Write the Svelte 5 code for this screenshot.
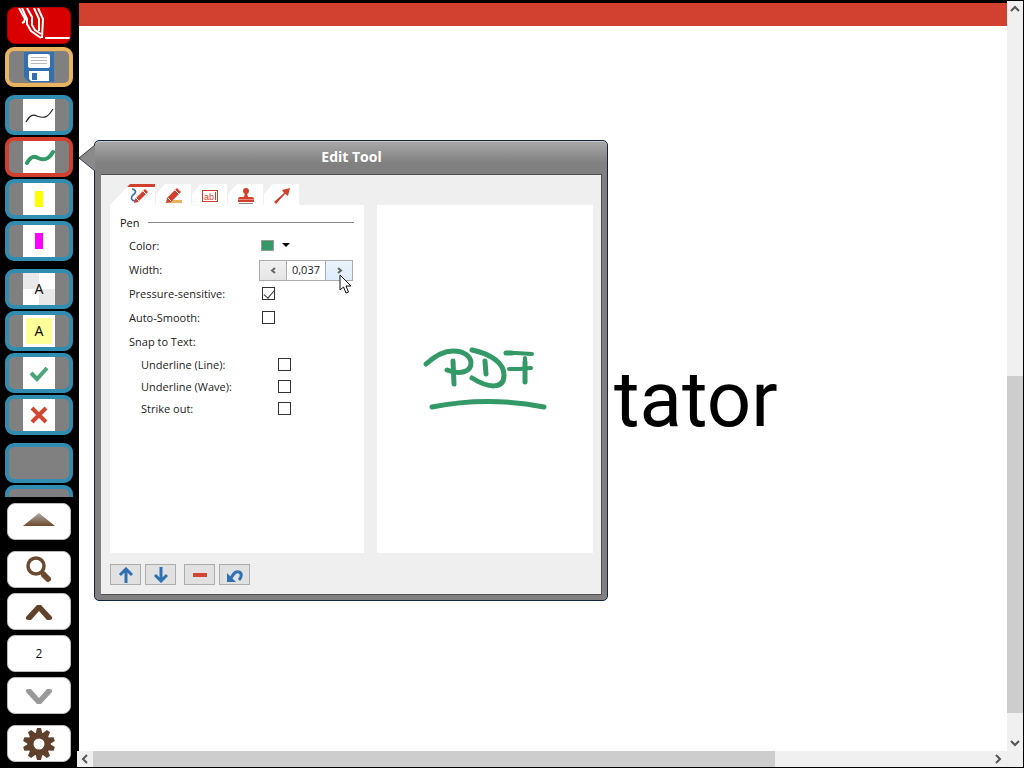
<script lang="ts">
  let active = $state('green-pen');
  let tab = $state('pen');
  let widthText = $state('0,037');
  let pressure = $state(true);
  let smooth = $state(false);
  let line = $state(false);
  let wave = $state(false);
  let strike = $state(false);

  const groups = [
    ['thin-pen', 'green-pen', 'yellow-marker', 'pink-marker'],
    ['text', 'note', 'check', 'cross'],
    ['empty', 'empty-2'],
  ];
  const tabs = ['pen', 'marker', 'text', 'stamp', 'arrow'];
</script>

<div class="app">
  <aside>
    <button class="key logo" aria-label="Application menu">
      <svg width="64" height="36" viewBox="0 0 64 36" fill="none" stroke="#fff" stroke-width="2">
        <path d="M12 0l6 11-1 3-2 1M15 0l5 11v5l4 7 10 7M20 0l5 9v8l3 5 6 4M27 0l5 11v12M31 0l5 11-1 19" />
        <path d="M38 30h25" />
      </svg>
    </button>
    <button class="tool save" aria-label="Save">
      <svg width="32" height="32" viewBox="0 0 32 32">
        <path d="M1 1h30v30H6l-5-5z" fill="#346fb0" />
        <rect x="5" y="3" width="22" height="14" rx="2" fill="#fff" />
        <path d="M8 6.500h16M8 9.500h16M8 12.500h16" stroke="#bbb" />
        <path d="M6 20h20v10H8l-2-2z" fill="#fff" /><rect x="9" y="22" width="5" height="7" fill="#346fb0" />
      </svg>
    </button>
    <div class="list">
      {#each groups as group}
        <div class="group">
          {#each group as name}
            <button class="tool" class:active={active === name} aria-label={name} onclick={() => (active = name)}>
              {#if !name.startsWith('empty')}
                <svg width="32" height="32" viewBox="0 0 32 32">
                  <rect width="32" height="32" fill="#fff" />
                  {#if name === 'thin-pen'}
                    <path d="M3 23C7 16 10 15 14 17c8 3 11 1 16-7" fill="none" stroke="#222" stroke-width="1.200" />
                  {:else if name === 'green-pen'}
                    <path d="M4 22C8 15 11 15 15 17c7 3 11 1 15-6" fill="none" stroke="#339966" stroke-width="4" stroke-linecap="round" />
                  {:else if name === 'yellow-marker'}
                    <rect x="12" y="8" width="8" height="16" fill="#ff0" />
                  {:else if name === 'pink-marker'}
                    <rect x="12" y="8" width="8" height="16" fill="#f0f" />
                  {:else if name === 'text'}
                    <path d="M0 0h16v32h16V16H0z" fill="#e9e9e9" />
                    <text x="16" y="21" text-anchor="middle">A</text>
                  {:else if name === 'note'}
                    <rect x="3" y="3" width="26" height="26" fill="#ff9" />
                    <text x="16" y="21" text-anchor="middle">A</text>
                  {:else if name === 'check'}
                    <path d="M8 16l6 6L24 11" fill="none" stroke="#4aa579" stroke-width="4" />
                  {:else if name === 'cross'}
                    <path d="M9 9l14 14M23 9L9 23" fill="none" stroke="#d04832" stroke-width="4" />
                  {/if}
                </svg>
              {/if}
            </button>
          {/each}
        </div>
      {/each}
    </div>
    <button class="key" aria-label="Scroll tools up">
      <svg width="32" height="32" viewBox="0 0 32 32">
        <defs><linearGradient id="up" x2="0" y2="1"><stop stop-color="#aaa" /><stop offset="1" stop-color="#70492c" /></linearGradient></defs>
        <path d="M16 7l16 13H0z" fill="url(#up)" />
      </svg>
    </button>
    <div class="nav">
      <button class="key" aria-label="Zoom">
        <svg width="32" height="32" viewBox="0 0 32 32" fill="none" stroke="#6b4a31">
          <circle cx="13" cy="12" r="8" stroke-width="3.500" /><path d="M19 18l3 3" stroke-width="4" /><path d="M21 21l4 4" stroke-width="6" stroke-linecap="round" />
        </svg>
      </button>
      <button class="key" aria-label="Previous page">
        <svg width="32" height="32" viewBox="0 0 32 32"><path d="M14 9h4l11 12q1 3-3 3h-2l-8-9-8 9H6q-4 0-3-3z" fill="#60412c" /></svg>
      </button>
      <button class="key number">2</button>
      <button class="key" aria-label="Next page">
        <svg width="32" height="32" viewBox="0 0 32 32"><path d="M14 24h4l11-12q1-3-3-3h-2l-8 9-8-9H6q-4 0-3 3z" fill="#999" /></svg>
      </button>
    </div>
    <button class="key" aria-label="Settings">
      <svg width="34" height="34" viewBox="-17 -17 34 34">
        <g fill="#60412c">
          {#each Array(10) as _, i}
            <path d="M-3.500-10L-2-16H2L3.500-10z" transform="rotate({i * 36})" />
          {/each}
        </g>
        <circle r="8.500" fill="none" stroke="#60412c" stroke-width="6" />
      </svg>
    </button>
  </aside>

  <main>
    <section class="page">
      <div class="band"></div>
      <h1>tator</h1>
    </section>
    <div class="bar vertical">
      <svg width="16" height="16" viewBox="0 0 16 16"><path d="M4 10l4-4 4 4" /></svg>
      <div class="track"><div class="thumb"></div></div>
      <svg width="16" height="16" viewBox="0 0 16 16"><path d="M4 6l4 4 4-4" /></svg>
    </div>
    <div class="bar horizontal">
      <svg width="16" height="16" viewBox="0 0 16 16"><path d="M10 4L6 8l4 4" /></svg>
      <div class="track"><div class="thumb"></div></div>
      <svg width="16" height="16" viewBox="0 0 16 16"><path d="M6 4l4 4-4 4" /></svg>
    </div>
  </main>

  <div class="dialog" role="dialog" aria-labelledby="title">
    <svg class="pointer" width="17" height="28" viewBox="0 0 17 28"><path d="M17 1L1 14l16 13z" fill="#8a8a8a" /><path d="M17 1L1 14l16 13" fill="none" stroke="#35414d" /></svg>
    <h2 id="title">Edit Tool</h2>
    <div class="body">
      <div class="tabs" role="tablist">
        {#each tabs as name}
          <button role="tab" class="tab" class:first={name === 'pen'} aria-selected={tab === name} aria-label={name} onclick={() => (tab = name)}>
            {#if name === 'pen'}
              <svg width="20" height="20" viewBox="0 0 20 20" fill="none">
                <path d="M2 4c5 1 4 4 1 6-3 3-1 6 2 6" stroke="#346fb0" stroke-width="1.600" />
                <path d="M4 18l1-4L15 4l3 3L8 17z" fill="#d2402d" /><path d="M13 6l3 3M6 13l3 3" stroke="#fff" />
              </svg>
            {:else if name === 'marker'}
              <svg width="20" height="20" viewBox="0 0 20 20" fill="none">
                <path d="M6 15h12v3H3z" fill="#e6b35c" /><path d="M2 18l1-5L13 3l4 4L7 17z" fill="#d2402d" /><path d="M11 5l4 4M4 13l3 3" stroke="#fff" />
              </svg>
            {:else if name === 'text'}
              <svg width="20" height="20" viewBox="0 0 20 20">
                <rect x="2.500" y="5.500" width="15" height="11" fill="#fff" stroke="#d2402d" />
                <text class="abl" x="9" y="15" text-anchor="middle">ab</text><path d="M15.500 7v8" stroke="#d2402d" />
              </svg>
            {:else if name === 'stamp'}
              <svg width="20" height="20" viewBox="0 0 20 20">
                <circle cx="10" cy="6" r="3" fill="#d2402d" /><path d="M9 8h2l1 4h4q2 0 2 2v3H2v-3q0-2 2-2h4z" fill="#d2402d" />
                <path d="M2 14.500h16" stroke="#ee8b80" /><path d="M3 18.500h14" stroke="#888" />
              </svg>
            {:else}
              <svg width="20" height="20" viewBox="0 0 20 20"><path d="M18 3l-2 8-3-2-9 10-2-2L12 8l-2-3z" fill="#d2402d" /></svg>
            {/if}
          </button>
        {/each}
      </div>

      <div class="panels">
        <form class="options" onsubmit={(e) => e.preventDefault()}>
          <div class="heading"><h3>Pen</h3><hr /></div>
          <div class="row">
            <label for="color">Color:</label>
            <button id="color" class="color" type="button" aria-label="Color">
              <span class="swatch"></span>
              <svg width="8" height="4" viewBox="0 0 8 4"><path d="M0 0h8L4 4z" /></svg>
            </button>
          </div>
          <div class="row">
            <label for="width">Width:</label>
            <span class="stepper">
              <button type="button" aria-label="Decrease"><svg width="7" height="7" viewBox="0 0 7 7"><path d="M5 1L2 3.500 5 6" /></svg></button>
              <input id="width" type="text" bind:value={widthText} />
              <button type="button" class="hover" aria-label="Increase"><svg width="7" height="7" viewBox="0 0 7 7"><path d="M2 1l3 2.500L2 6" /></svg></button>
            </span>
          </div>
          <div class="row"><label for="pressure">Pressure-sensitive:</label><input id="pressure" type="checkbox" bind:checked={pressure} /></div>
          <div class="row"><label for="smooth">Auto-Smooth:</label><input id="smooth" type="checkbox" bind:checked={smooth} /></div>
          <div class="row">Snap to Text:</div>
          <div class="row sub"><label for="line">Underline (Line):</label><input id="line" type="checkbox" bind:checked={line} /></div>
          <div class="row sub"><label for="wave">Underline (Wave):</label><input id="wave" type="checkbox" bind:checked={wave} /></div>
          <div class="row sub"><label for="strike">Strike out:</label><input id="strike" type="checkbox" bind:checked={strike} /></div>
        </form>
        <div class="preview">
          <svg width="216" height="80" viewBox="377 340 216 80" fill="none" stroke="#339966" stroke-width="5" stroke-linecap="round" stroke-linejoin="round">
            <path d="M426 364C437 354 446 351 453 351c12 0 18 6 18 12 0 9-11 12-24 7M453 361l1 23" />
            <path d="M472 350c19 4 32 13 32 25 0 15-16 13-32 3M485 361l1 13" />
            <path d="M506 353h10l16 1M525 358v24M509 369h10l12-1" stroke-width="4" />
            <path d="M506 353h6M525 362v20" />
            <path d="M432 407c40-8 76-7 112 0" />
          </svg>
        </div>
      </div>

      <div class="actions">
        <button aria-label="Move up"><svg width="16" height="16" viewBox="0 0 16 16"><path d="M8 16V2M2 8l6-6 6 6" /></svg></button>
        <button aria-label="Move down"><svg width="16" height="16" viewBox="0 0 16 16"><path d="M8 0v14M2 8l6 6 6-6" /></svg></button>
        <button class="gap" aria-label="Remove"><svg width="16" height="16" viewBox="0 0 16 16"><path d="M1 8h14" class="minus" /></svg></button>
        <button aria-label="Undo"><svg width="16" height="16" viewBox="0 0 16 16"><path d="M4 11C7 5 10 4 12 5c3 1 3 5 0 8" /><path class="head" d="M0 6v9h9z" /></svg></button>
      </div>
    </div>
    <svg class="cursor" width="13" height="20" viewBox="0 0 13 20"><path d="M1 1v15l3.500-3L7 19l2.500-1L7 12h5z" fill="#fff" stroke="#111" /></svg>
  </div>
</div>

<style>
  :global(body) { background: #000; }
  * { box-sizing: border-box; }
  button { padding: 0; margin: 0; border: 0; font: inherit; color: inherit; display: flex; align-items: center; justify-content: center; flex-shrink: 0; }
  svg { display: block; flex-shrink: 0; }
  h1, h2, h3 { margin: 0; }

  .app { position: relative; display: grid; grid-template-columns: 79px 1fr; height: 100vh; overflow: hidden; background: #000; font: 11px/16px "Open Sans", "Noto Sans", sans-serif; color: #222; }

  aside { display: flex; flex-direction: column; align-items: center; padding: 7px 1px 6px 0; min-height: 0; }
  .key { width: 64px; height: 37px; border-radius: 8px; background: #fff; border: 1px solid #bbb; }
  .logo { background: #d80000; border-color: #a00; overflow: hidden; }
  .tool { width: 68px; height: 40px; border: 4px solid #318db0; border-radius: 9px; background: #808080; }
  .save { margin-top: 3px; border-color: #e9b462; }
  .tool.active { border-color: #d2402d; }
  .tool text { font: 14px "Noto Sans", sans-serif; fill: #111; }
  .list { flex: 1; min-height: 0; overflow: hidden; display: flex; flex-direction: column; gap: 8px; padding-top: 8px; margin-bottom: 6px; }
  .group, .nav { display: flex; flex-direction: column; gap: 2px; }
  .nav { gap: 5px; margin: 11px 0; }
  .number { font-size: 12px; color: #111; }

  main { display: grid; grid-template-columns: 1fr 16px; grid-template-rows: 1fr 16px; min-width: 0; padding: 0 1px 1px 0; }
  .page { background: #fff; border-top: 3px solid #000; display: flex; flex-direction: column; min-height: 0; min-width: 0; }
  .band { height: 23px; background: #d2402f; }
  h1 { font: 400 78px/92px Roboto, sans-serif; color: #000; padding: 328px 0 0 535px; }
  .bar { display: flex; background: #f0f0f0; }
  .vertical { flex-direction: column; margin-top: 1px; }
  .horizontal { grid-column: 1 / 3; margin-left: -2px; padding-right: 17px; }
  .bar path { fill: none; stroke: #555; stroke-width: 2; }
  .track { flex: 1; display: flex; min-width: 0; min-height: 0; }
  .vertical .track { flex-direction: column; padding-top: 359px; }
  .vertical .thumb { flex: 0 0 94%; width: 16px; }
  .horizontal .thumb { width: 76%; height: 16px; }
  .thumb { background: #cdcdcd; }

  .dialog { position: absolute; left: 94px; top: 140px; width: 514px; padding: 0 5px 5px 6px; border: 1px solid #10263c; border-radius: 5px; background: linear-gradient(#aaa, #808080 22px); box-shadow: inset 0 1px #c8c8c8; }
  .pointer { position: absolute; left: -17px; top: 3px; }
  .cursor { position: absolute; left: 244px; top: 133px; }
  h2 { font: 700 14px/32px "Open Sans", sans-serif; color: #fff; text-align: center; height: 34px; border-bottom: 1px solid #505050; }
  .body { background: #efefef; padding: 9px 8px 9px 9px; border-right: 1px solid #505050; border-bottom: 1px solid #505050; }
  .tabs { display: flex; gap: 1px; height: 21px; }
  .tab { width: 35px; background: #fff; clip-path: polygon(0 10px, 9px 0, 100% 0, 100% 100%, 0 100%); }
  .first { width: 45px; padding-left: 14px; background: linear-gradient(#d2402d 3px, #fff 3px); clip-path: polygon(0 100%, 20px 0, 100% 0, 100% 100%); }
  .abl { font: 9px "Liberation Sans", sans-serif; fill: #d2402d; }
  .panels { display: grid; grid-template-columns: 254fr 216fr; gap: 13px; }
  .options, .preview { background: #fff; height: 348px; }
  .options { padding: 7px 10px; }
  .heading { display: flex; align-items: center; gap: 8px; height: 22px; }
  h3 { font: inherit; color: #111; }
  hr { flex: 1; margin: 0 0 2px; border: 0; border-top: 1px solid #888; }
  .row { display: grid; grid-template-columns: 130px 1fr; align-items: center; height: 24px; padding-left: 9px; }
  .sub { grid-template-columns: 134px 1fr; height: 22px; padding-left: 21px; }
  .row input[type='checkbox'] { appearance: none; width: 13px; height: 13px; margin: 0 3px 2px; border: 1px solid #333; background: #fff; display: grid; place-items: center; }
  .row input[type='checkbox']:checked::before { content: ''; width: 5px; height: 9px; margin-bottom: 2px; border: solid #333; border-width: 0 1px 1px 0; transform: rotate(40deg); }
  .color { justify-content: flex-start; gap: 8px; background: none; width: 32px; margin: 0 0 2px 2px; }
  .swatch { width: 13px; height: 11px; background: #339966; border: 1px solid #999; }
  .stepper { display: flex; height: 21px; width: 94px; border: 1px solid #acacac; }
  .stepper button { width: 26px; background: linear-gradient(#f0f0f0, #e5e5e5); }
  .stepper .hover { background: linear-gradient(#eaf3fb, #deecfb); }
  .stepper path { fill: none; stroke: #666; stroke-width: 2; }
  .stepper input { width: 40px; min-width: 0; border: solid #acacac; border-width: 0 1px; padding: 0; text-align: center; font: inherit; color: inherit; outline: 0; }
  .preview { display: flex; align-items: flex-start; justify-content: center; padding-top: 135px; }
  .actions { display: flex; gap: 4px; padding-top: 11px; }
  .actions button { width: 31px; height: 21px; background: #e1e1e1; border: 1px solid #adadad; }
  .actions path { fill: none; stroke: #2f70b3; stroke-width: 3; }
  .actions .gap { margin-left: 4px; }
  .actions .minus { stroke: #d04832; stroke-width: 4; }
  .actions .head { fill: #2f70b3; stroke: none; }
</style>
